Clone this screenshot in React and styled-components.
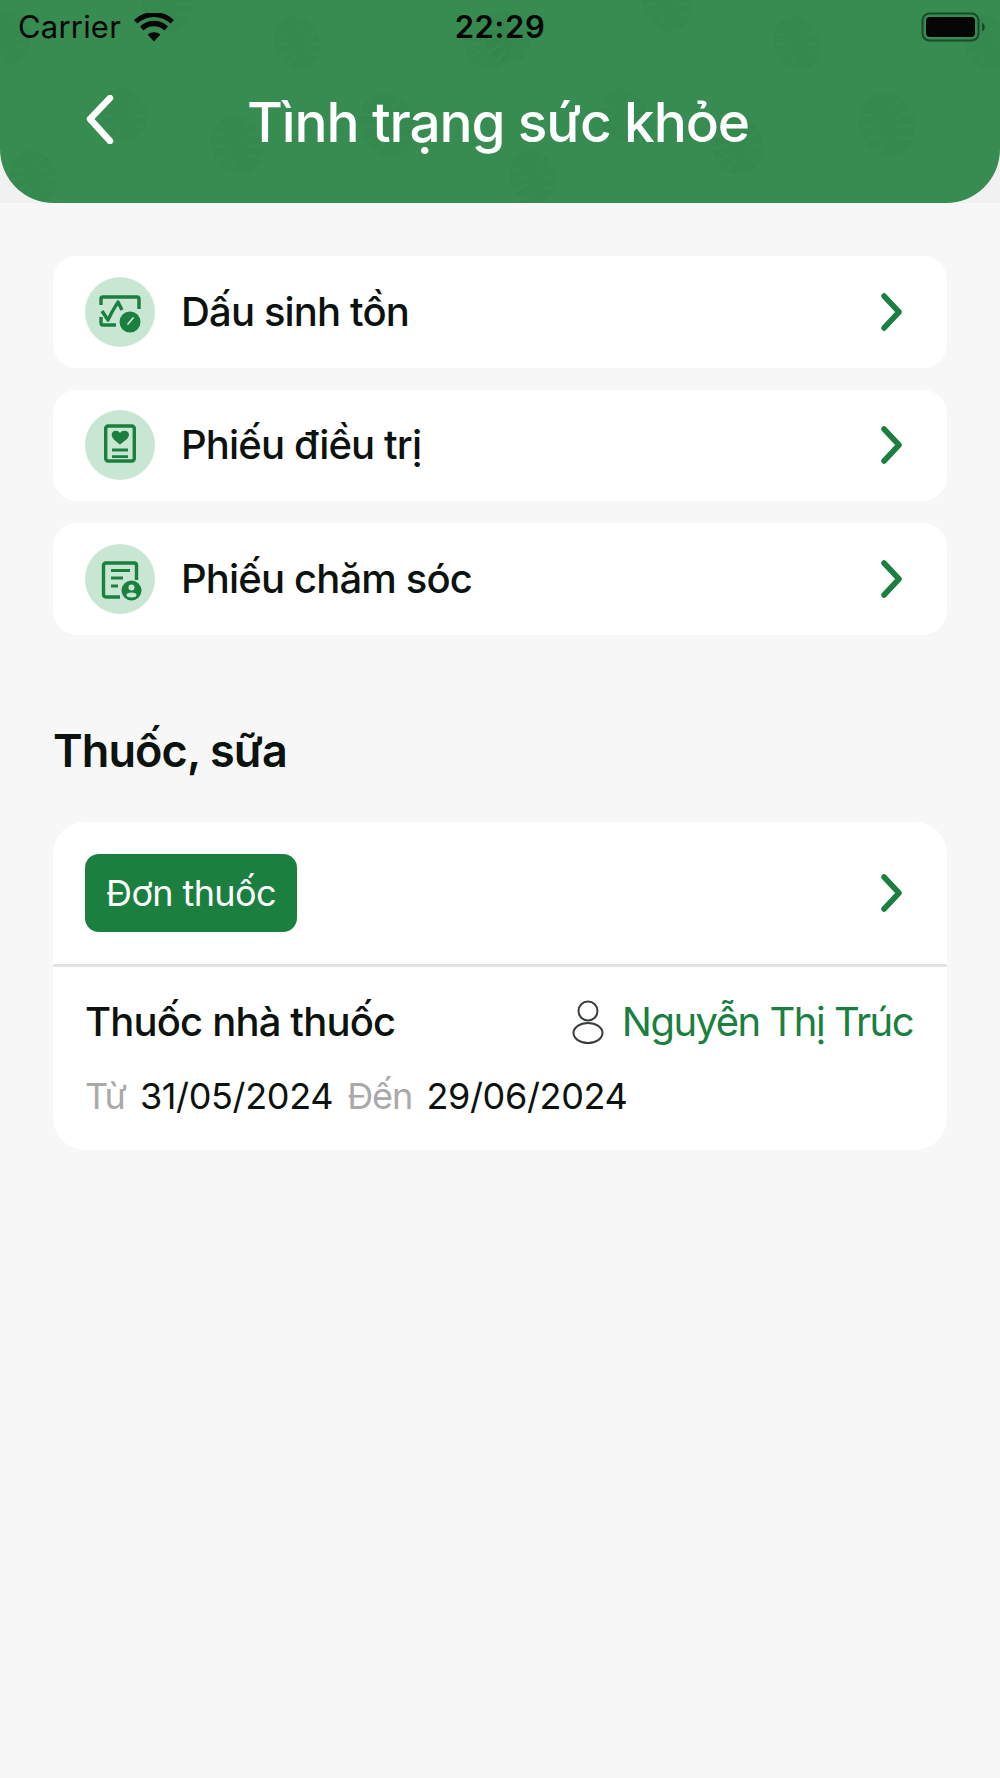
import React from 'react'
import styled, { createGlobalStyle } from 'styled-components';

const GlobalStyle = createGlobalStyle`
  * { box-sizing: border-box; }
  html, body { margin: 0; padding: 0; background: #f7f7f7; }
  body { font-family: Inter, "Noto Sans", sans-serif; color: #0c120e; }
`

const Page = styled.div`
  width: 1000px;
  height: 1778px;
  background: #f7f7f7;
  overflow: hidden;
`

const HeaderBackdrop = styled.div`
  background: #f1f1f1;
`

const Header = styled.header`
  position: relative;
  height: 203px;
  background: #378c52;
  border-radius: 0 0 54px 54px;
  overflow: hidden;
`

const LeafLayer = styled.svg`
  position: absolute;
  left: 0;
  top: 0;
`

const HeaderContent = styled.div`
  position: relative;
  display: flex;
  flex-direction: column;
`

const StatusBar = styled.div`
  height: 54px;
  padding: 0 15px 0 18px;
  display: grid;
  grid-template-columns: 1fr auto 1fr;
  align-items: center;
  color: #050505;
`

const StatusLeft = styled.div`
  display: flex;
  align-items: center;
  gap: 13px;
  font-size: 31px;
  letter-spacing: 0.2px;
  line-height: 34px;
`

const StatusTime = styled.div`
  margin-right: 3px;
  font-size: 31px;
  font-weight: 600;
  letter-spacing: 0.6px;
  line-height: 34px;
`

const StatusRight = styled.div`
  display: flex;
  justify-content: flex-end;
`

const NavBar = styled.div`
  position: relative;
  height: 136px;
  display: flex;
  align-items: center;
  justify-content: center;
`

const BackButton = styled.div`
  position: absolute;
  left: 86px;
  top: 41px;
  display: flex;
`

const Title = styled.h1`
  margin: 0 4px 0 0;
  color: #fff;
  font-size: 55px;
  font-weight: 500;
  letter-spacing: -1.15px;
  line-height: 64px;
`

const Content = styled.main`
  padding: 53px 53px 0;
`

const RowList = styled.div`
  display: flex;
  flex-direction: column;
  gap: 22px;
`

const Row = styled.div`
  height: 111.5px;
  padding: 0 32px;
  display: flex;
  align-items: center;
  background: #fff;
  border-radius: 24px;
`

const IconCircle = styled.div`
  width: 70px;
  height: 70px;
  border-radius: 50%;
  background: #c9e6d3;
  display: flex;
  align-items: center;
  justify-content: center;
  flex: none;
`

const RowLabel = styled.div`
  flex: 1;
  margin-left: 26px;
  font-size: 40px;
  font-weight: 500;
  letter-spacing: -0.85px;
  line-height: 48px;
`

const SectionTitle = styled.h2`
  margin: 89px 0 44px;
  font-size: 45px;
  font-weight: 600;
  letter-spacing: -0.9px;
  line-height: 54px;
`

const MedicineCard = styled.section`
  background: #fff;
  border-radius: 32px;
  overflow: hidden;
`

const MedicineHead = styled.div`
  height: 145px;
  padding: 32px 32px 0;
  display: flex;
  align-items: flex-start;
  justify-content: space-between;
  border-bottom: 3px solid #e2e2e2;
`

const Badge = styled.div`
  width: 212px;
  height: 78px;
  border-radius: 14px;
  background: #1a7f3f;
  color: #fff;
  font-size: 36px;
  font-weight: 400;
  letter-spacing: -0.6px;
  display: flex;
  align-items: center;
  justify-content: center;
`

const MedicineBody = styled.div`
  padding: 30px 34px 0 32px;
  height: 183px;
`

const MedicineTop = styled.div`
  display: flex;
  align-items: center;
  justify-content: space-between;
`

const MedicineName = styled.div`
  font-size: 40px;
  font-weight: 500;
  letter-spacing: -0.83px;
  line-height: 50px;
`

const Patient = styled.div`
  display: flex;
  align-items: center;
  gap: 18px;
  color: #1a7f3f;
  font-size: 40px;
  letter-spacing: -1.5px;
  line-height: 50px;
`

const DateRow = styled.div`
  margin-top: 27px;
  display: flex;
  align-items: center;
  font-size: 36px;
  line-height: 44px;
`

const DateLabel = styled.span`
  color: #a9a9a9;
  letter-spacing: -1px;
  margin-right: 14px;
`

const DateValue = styled.span`
  letter-spacing: -0.35px;
  margin-right: 14px;
`

const ChevronBox = styled.svg`
  flex: none;
  margin-right: ${props => props.$shift || 0}px;
  margin-top: ${props => props.$top || 0}px;
`

const leaves = [
  [297, 43, 26], [123, 115, 26], [237, 145, 29], [33, 177, 26], [7, 37, 26],
  [167, 3, 28], [387, 125, 31], [487, 43, 26],
]

function Leaf({ x, y, r }) {
  return (
    <g transform={`translate(${x} ${y}) rotate(-20) scale(${r / 26})`}>
      <ellipse rx="23" ry="27" fill="#2f7f49" fillOpacity="0.25" />
      <path
        d="M-23 -18L-7 -11M-26 -5L-7 -3M-25 8L-7 5M-18 20L-6 12M23 -18L7 -11M26 -5L7 -3M25 8L7 5M18 20L6 12"
        stroke="#378c52"
        strokeWidth="2"
        fill="none"
      />
    </g>
  );
}

function LeafPattern() {
  const all = [];
  [0, 500].forEach(off => leaves.forEach(l => all.push([l[0] + off, l[1], l[2]])));
  return (
    <LeafLayer width="1000" height="203" viewBox="0 0 1000 203">
      {all.map((l, i) => <Leaf key={i} x={l[0]} y={l[1]} r={l[2]} />)}
    </LeafLayer>
  );
}

function Wifi() {
  return (
    <svg width="40" height="29" viewBox="0 0 40 29">
      <path d="M20 28.5 L13.6 21.6 A9.6 9.6 0 0 1 26.4 21.6 Z" fill="#050505" />
      <path d="M9.6 17.4 L6 13.5 A20 20 0 0 1 34 13.5 L30.4 17.4 A15 15 0 0 0 9.6 17.4 Z" fill="#050505" />
      <path d="M3.4 10.6 L0 6.9 A29.5 29.5 0 0 1 40 6.9 L36.6 10.6 A24.5 24.5 0 0 0 3.4 10.6 Z" fill="#050505" />
    </svg>
  );
}

function Battery() {
  return (
    <svg width="64" height="30" viewBox="0 0 64 30">
      <rect x="1.5" y="1.5" width="56" height="27" rx="7" fill="none" stroke="#1b4a2b" strokeWidth="2" />
      <rect x="5" y="5" width="49" height="20" rx="4" fill="#050505" />
      <path d="M61 10.5 A5 5 0 0 1 61 19.5 Z" fill="#1b4a2b" />
    </svg>
  );
}

function Chevron({ color, stroke, left, ...rest }) {
  const points = left ? '24,3 4,24 24,46' : '4,3 19,19 4,35';
  return (
    <ChevronBox width={left ? 28 : 23} height={left ? 49 : 38} viewBox={left ? '0 0 28 49' : '0 0 23 38'} {...rest}>
      <polyline points={points} fill="none" stroke={color} strokeWidth={stroke} strokeLinecap="round" strokeLinejoin="round" />
    </ChevronBox>
  );
}

function VitalsIcon() {
  return (
    <svg width="44" height="44" viewBox="0 0 44 44">
      <path d="M3 15V9Q3 7 5 7H39Q41 7 41 9V19M3 27V33Q3 35 5 35H18" fill="none" stroke="#1a7f3f" strokeWidth="3.4" />
      <polyline points="4,21 10,30 14,22 20,12 24,20" fill="none" stroke="#1a7f3f" strokeWidth="3.4" strokeLinejoin="round" />
      <circle cx="32" cy="32" r="10.5" fill="#1a7f3f" />
      <path d="M30 34L35 28" stroke="#c9e6d3" strokeWidth="1.8" strokeLinecap="round" />
    </svg>
  );
}

function TreatmentIcon() {
  return (
    <svg width="36" height="44" viewBox="0 0 36 44">
      <rect x="3.7" y="3" width="28.6" height="35" rx="2.5" fill="none" stroke="#1a7f3f" strokeWidth="3.4" />
      <path d="M18 21.5C13.5 18 9.7 15.5 9.7 11.5C9.7 7.5 15.5 6 18 10C20.5 6 27 7.5 27 11.5C27 15.5 22.5 18 18 21.5Z" fill="#1a7f3f" />
      <path d="M10 27H26M10 33.6H26" stroke="#1a7f3f" strokeWidth="2.8" />
    </svg>
  );
}

function CareIcon() {
  return (
    <svg width="44" height="44" viewBox="0 0 44 44">
      <path d="M22 40H8Q5.5 40 5.5 37.5V8.5Q5.5 6 8 6H36Q38.5 6 38.5 8.5V23" fill="none" stroke="#1a7f3f" strokeWidth="3.4" />
      <path d="M13 13.5H32M13 21H25M13 29H20" stroke="#1a7f3f" strokeWidth="2.8" />
      <circle cx="33.5" cy="33.5" r="10" fill="#1a7f3f" />
      <circle cx="33.5" cy="30.5" r="3" fill="#c9e6d3" />
      <ellipse cx="33.5" cy="38" rx="5" ry="2.5" fill="#c9e6d3" />
    </svg>
  );
}

function PersonIcon() {
  return (
    <svg width="32" height="44" viewBox="0 0 32 44">
      <circle cx="16" cy="11" r="9.5" fill="none" stroke="#3a3f3c" strokeWidth="2" />
      <ellipse cx="16" cy="33" rx="14.5" ry="10" fill="none" stroke="#3a3f3c" strokeWidth="2" />
    </svg>
  );
}

const rows = [
  { label: 'Dấu sinh tồn', icon: <VitalsIcon /> },
  { label: 'Phiếu điều trị', icon: <TreatmentIcon /> },
  { label: 'Phiếu chăm sóc', icon: <CareIcon /> },
];

export default function App() {
  return (
    <Page>
      <GlobalStyle />
      <HeaderBackdrop>
        <Header>
          <LeafPattern />
          <HeaderContent>
            <StatusBar>
              <StatusLeft>Carrier <Wifi /></StatusLeft>
              <StatusTime>22:29</StatusTime>
              <StatusRight><Battery /></StatusRight>
            </StatusBar>
            <NavBar>
              <BackButton>
                <Chevron left color="#fff" stroke="6.5" />
              </BackButton>
              <Title>Tình trạng sức khỏe</Title>
            </NavBar>
          </HeaderContent>
        </Header>
      </HeaderBackdrop>
      <Content>
        <RowList>
          {rows.map(row => (
            <Row key={row.label}>
              <IconCircle>{row.icon}</IconCircle>
              <RowLabel>{row.label}</RowLabel>
              <Chevron color="#1a7f3f" stroke="5.5" $shift={12} />
            </Row>
          ))}
        </RowList>
        <SectionTitle>Thuốc, sữa</SectionTitle>
        <MedicineCard>
          <MedicineHead>
            <Badge>Đơn thuốc</Badge>
            <Chevron color="#1a7f3f" stroke="5.5" $shift={12} $top={20} />
          </MedicineHead>
          <MedicineBody>
            <MedicineTop>
              <MedicineName>Thuốc nhà thuốc</MedicineName>
              <Patient><PersonIcon />Nguyễn Thị Trúc</Patient>
            </MedicineTop>
            <DateRow>
              <DateLabel>Từ</DateLabel>
              <DateValue>31/05/2024</DateValue>
              <DateLabel>Đến</DateLabel>
              <DateValue>29/06/2024</DateValue>
            </DateRow>
          </MedicineBody>
        </MedicineCard>
      </Content>
    </Page>
  );
}
